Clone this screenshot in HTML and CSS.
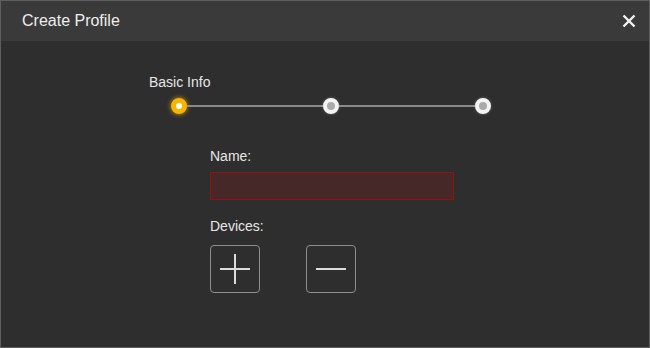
FILE: index.html
```html
<!DOCTYPE html>
<html>
<head>
<meta charset="utf-8">
<link rel="stylesheet" href="styles.css">
</head>
<body>
<div class="dialog">
  <div class="header">
    <span class="title">Create Profile</span>
    <svg class="close" width="14" height="14" viewBox="0 0 14 14"><path d="M1.5 1.5 L12.5 12.5 M12.5 1.5 L1.5 12.5" stroke="#f2f2f2" stroke-width="2.4" fill="none"/></svg>
  </div>
  <div class="content">
    <div class="step-label">Basic Info</div>
    <div class="track">
      <span class="dot active"></span>
      <span class="line"></span>
      <span class="dot"></span>
      <span class="line"></span>
      <span class="dot"></span>
    </div>
    <div class="form">
      <label class="label">Name:</label>
      <div class="input"></div>
      <label class="label devices">Devices:</label>
      <div class="buttons">
        <div class="btn"><span class="h"></span><span class="v"></span></div>
        <div class="btn"><span class="h"></span></div>
      </div>
    </div>
  </div>
</div>
</body>
</html>
```
FILE: styles.css
```css
* { box-sizing: border-box; }
html, body { margin: 0; padding: 0; }
body {
  width: 650px;
  height: 348px;
  background: #2e2e2e;
  font-family: "Liberation Sans", Arial, sans-serif;
  color: #e6e6e6;
}
.dialog {
  width: 650px;
  height: 348px;
  border: 1px solid #5e5e5e;
  background: #2e2e2e;
  display: flex;
  flex-direction: column;
}
.header {
  height: 40px;
  background: #3a3a3a;
  display: flex;
  align-items: center;
  justify-content: space-between;
  padding: 0 13px 0 21px;
  flex-shrink: 0;
}
.title {
  font-size: 16px;
  color: #eeeeee;
  line-height: 18px;
}
.close { display: block; }
.content {
  padding-top: 33px;
  display: flex;
  flex-direction: column;
}
.step-label {
  font-size: 14px;
  line-height: 16px;
  padding-left: 148px;
  color: #e6e6e6;
}
.track {
  margin-top: 8px;
  padding-left: 170px;
  display: flex;
  align-items: center;
  height: 16px;
}
.dot {
  width: 16px;
  height: 16px;
  border-radius: 50%;
  background: #aaaaaa;
  border: 4px solid #f4f4f4;
  flex-shrink: 0;
  box-shadow: 0 0 3px rgba(255,255,255,0.3);
}
.dot.active {
  background: #ffffff;
  border: 5px solid #f7b500;
  box-shadow: 0 0 4px 1px rgba(247,181,0,0.55);
}
.line {
  width: 136px;
  height: 2px;
  background: #8a8a8a;
}
.form {
  padding-left: 209px;
  margin-top: 34px;
  display: flex;
  flex-direction: column;
  align-items: flex-start;
}
.label {
  font-size: 14px;
  line-height: 16px;
  color: #e6e6e6;
}
.input {
  margin-top: 8px;
  width: 244px;
  height: 28px;
  border: 1px solid #8f1515;
  background: #472828;
}
.devices { margin-top: 18px; }
.buttons {
  margin-top: 11px;
  display: flex;
  gap: 46px;
}
.btn {
  position: relative;
  width: 50px;
  height: 48px;
  border: 1px solid #8e8e8e;
  border-radius: 4px;
}
.btn .h {
  position: absolute;
  left: 9px;
  top: 22px;
  width: 30px;
  height: 2px;
  background: #dcdcdc;
}
.btn .v {
  position: absolute;
  left: 23px;
  top: 8px;
  width: 2px;
  height: 30px;
  background: #dcdcdc;
}
```
